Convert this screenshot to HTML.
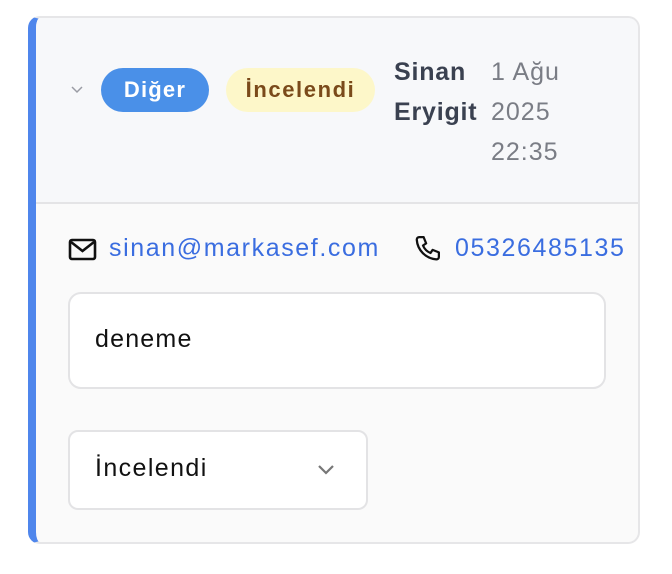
<!DOCTYPE html>
<html><head><meta charset="utf-8"><style>
*{box-sizing:border-box;margin:0;padding:0}
body{width:672px;height:574px;background:#fff;font-family:"Liberation Sans",Arial,sans-serif;position:relative;overflow:hidden}
.card{position:absolute;left:28px;top:16px;width:612px;height:528px;border-radius:12px;border:2px solid #e6e6e8;border-left:8px solid #4f86ec;overflow:hidden;background:#fafafa}
.head{position:absolute;left:0;top:0;right:0;height:186px;background:#f7f8fa;border-bottom:2px solid #e4e4e6}
.abs{position:absolute}
.pill{position:absolute;height:44px;border-radius:22px;font-weight:bold;font-size:22px;line-height:44px;text-align:center;letter-spacing:1.2px}
.t{font-size:25px;line-height:40px;letter-spacing:1px}
.big{font-size:25px;letter-spacing:1.6px}
</style></head><body>
<div class="card">
 <div class="head">
  <svg class="abs" style="left:34px;top:67px" width="14" height="10" viewBox="0 0 14 10"><path d="M2 2l5 5 5-5" fill="none" stroke="#9a9ca4" stroke-width="1.5"/></svg>
  <div class="pill" style="left:65px;top:50px;width:108px;background:#4a90e8;color:#fff">Diğer</div>
  <div class="pill" style="left:190px;top:50px;width:149px;background:#fdf7c9;color:#7a4a1a;letter-spacing:1.6px">İncelendi</div>
  <div class="abs t" style="left:358px;top:34px;color:#3a4150;font-weight:bold;letter-spacing:0.8px">Sinan<br>Eryigit</div>
  <div class="abs t" style="left:455px;top:34px;color:#7a7d85">1 Ağu<br>2025<br>22:35</div>
 </div>
 <svg class="abs" style="left:32px;top:219px" width="30" height="26" viewBox="0 0 30 26"><rect x="2" y="3" width="25" height="19" rx="2" fill="none" stroke="#111" stroke-width="2.6"/><path d="M3 5l11.5 9L26 5" fill="none" stroke="#111" stroke-width="2.6"/></svg>
 <div class="abs big" style="left:73px;top:216px;color:#3a6de0">sinan@markasef.com</div>
 <svg class="abs" style="left:377px;top:216px" width="30" height="30" viewBox="0 0 24 24"><path d="M5 2.5h3.5l2 5-2.5 1.7a11 11 0 0 0 6 6l1.7-2.5 5 2v3.6a2 2 0 0 1-2 2A17 17 0 0 1 3 4.5a2 2 0 0 1 2-2z" fill="none" stroke="#111" stroke-width="1.8" stroke-linejoin="round"/></svg>
 <div class="abs big" style="left:419px;top:216px;color:#3a6de0;white-space:nowrap">05326485135</div>
 <div class="abs" style="left:32px;top:274px;width:538px;height:97px;background:#fff;border:2px solid #e3e3e5;border-radius:13px"></div>
 <div class="abs big" style="left:59px;top:307px;color:#111;letter-spacing:1.2px">deneme</div>
 <div class="abs" style="left:32px;top:412px;width:300px;height:80px;background:#fff;border:2px solid #e3e3e5;border-radius:10px"></div>
 <div class="abs big" style="left:59px;top:436px;color:#111;letter-spacing:1.4px">İncelendi</div>
 <svg class="abs" style="left:280px;top:445px" width="20" height="14" viewBox="0 0 20 14"><path d="M3 3l7 7 7-7" fill="none" stroke="#777" stroke-width="2.2"/></svg>
</div>
</body></html>
